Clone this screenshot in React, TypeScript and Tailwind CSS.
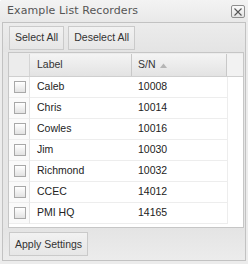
import React from 'react';

const rows = [
  { label: 'Caleb', sn: '10008' },
  { label: 'Chris', sn: '10014' },
  { label: 'Cowles', sn: '10016' },
  { label: 'Jim', sn: '10030' },
  { label: 'Richmond', sn: '10032' },
  { label: 'CCEC', sn: '14012' },
  { label: 'PMI HQ', sn: '14165' },
];

const Checkbox = () => (
  <div className="w-[12px] h-[12px] border border-[#a8a8a8] bg-gradient-to-b from-[#ffffff] to-[#e2e2e2]" />
);

const ToolButton = ({ children }: { children: React.ReactNode }) => (
  <button className="h-[24px] px-[5px] border border-[#cacaca] bg-gradient-to-b from-[#f2f2f2] to-[#e6e6e6] text-[10.5px] text-[#333] leading-none">
    {children}
  </button>
);

export default function App() {
  return (
    <div
      className="w-[248px] h-[264px] bg-[#ececec] flex flex-col overflow-hidden rounded-tl-[3px]"
      style={{ fontFamily: '"Liberation Sans", Arial, sans-serif' }}
    >
      <div className="h-[22px] flex items-center justify-between pl-[7px] pr-[3px] bg-gradient-to-b from-[#f3f3f3] to-[#e9e9e9]">
        <span className="text-[11px] text-[#555] tracking-[0.1px]" style={{ fontFamily: '"DejaVu Sans", sans-serif' }}>
          Example List Recorders
        </span>
        <div className="w-[14px] h-[13px] border border-[#8e8e8e] rounded-[2px] bg-gradient-to-b from-[#fafafa] to-[#e4e4e4] flex items-center justify-center mt-[1px]">
          <svg width="8" height="8" viewBox="0 0 8 8">
            <path d="M0.5 0.5 L7.5 7.5 M7.5 0.5 L0.5 7.5" stroke="#555" strokeWidth="1.1" />
          </svg>
        </div>
      </div>

      <div className="mx-[2px] h-[239px] border border-[#c2c2c2] bg-[#e6e6e6] flex flex-col">
        <div className="h-[29px] flex items-center gap-[4px] pl-[6px] bg-gradient-to-b from-[#ececec] to-[#e4e4e4]">
          <ToolButton>Select All</ToolButton>
          <ToolButton>Deselect All</ToolButton>
        </div>

        <div className="ml-[5px] mr-[1px] h-[176px] border border-[#c6c6c6] bg-white flex flex-col">
          <div className="h-[1px] bg-[#ececec]" />
          <div className="flex h-[23px] bg-gradient-to-b from-[#f4f4f4] to-[#e3e3e3] border-b border-[#cfcfcf] text-[10.5px] text-[#333]">
            <div className="w-[21px] border-r border-[#d4d4d4] bg-[#ececec]" />
            <div className="w-[102px] border-r border-[#c8c8c8] flex items-center pl-[7px]">Label</div>
            <div className="w-[95px] border-r border-[#c8c8c8] flex items-center pl-[6px] gap-[4px]">
              S/N
              <svg width="7" height="5" viewBox="0 0 7 5">
                <path d="M0 5 L3.5 0.5 L7 5 Z" fill="#b5b5b5" />
              </svg>
            </div>
            <div className="flex-1 bg-[#f2f2f2]" />
          </div>
          {rows.map((r) => (
            <div key={r.label} className="flex h-[21px] text-[10.5px] text-[#222]">
              <div className="w-[21px] flex items-center justify-center pl-[1px] border-r border-[#e4e4e4] border-b border-b-[#ededed] bg-[#fafafa]">
                <Checkbox />
              </div>
              <div className="w-[102px] flex items-center pl-[7px] border-b border-[#ededed]">{r.label}</div>
              <div className="w-[96px] flex items-center pl-[6px] border-b border-r border-[#ededed]">{r.sn}</div>
            </div>
          ))}
        </div>

        <div className="flex-1 flex items-center pl-[6px] bg-gradient-to-b from-[#e4e4e4] to-[#ececec]">
          <ToolButton>Apply Settings</ToolButton>
        </div>
      </div>
    </div>
  );
}
